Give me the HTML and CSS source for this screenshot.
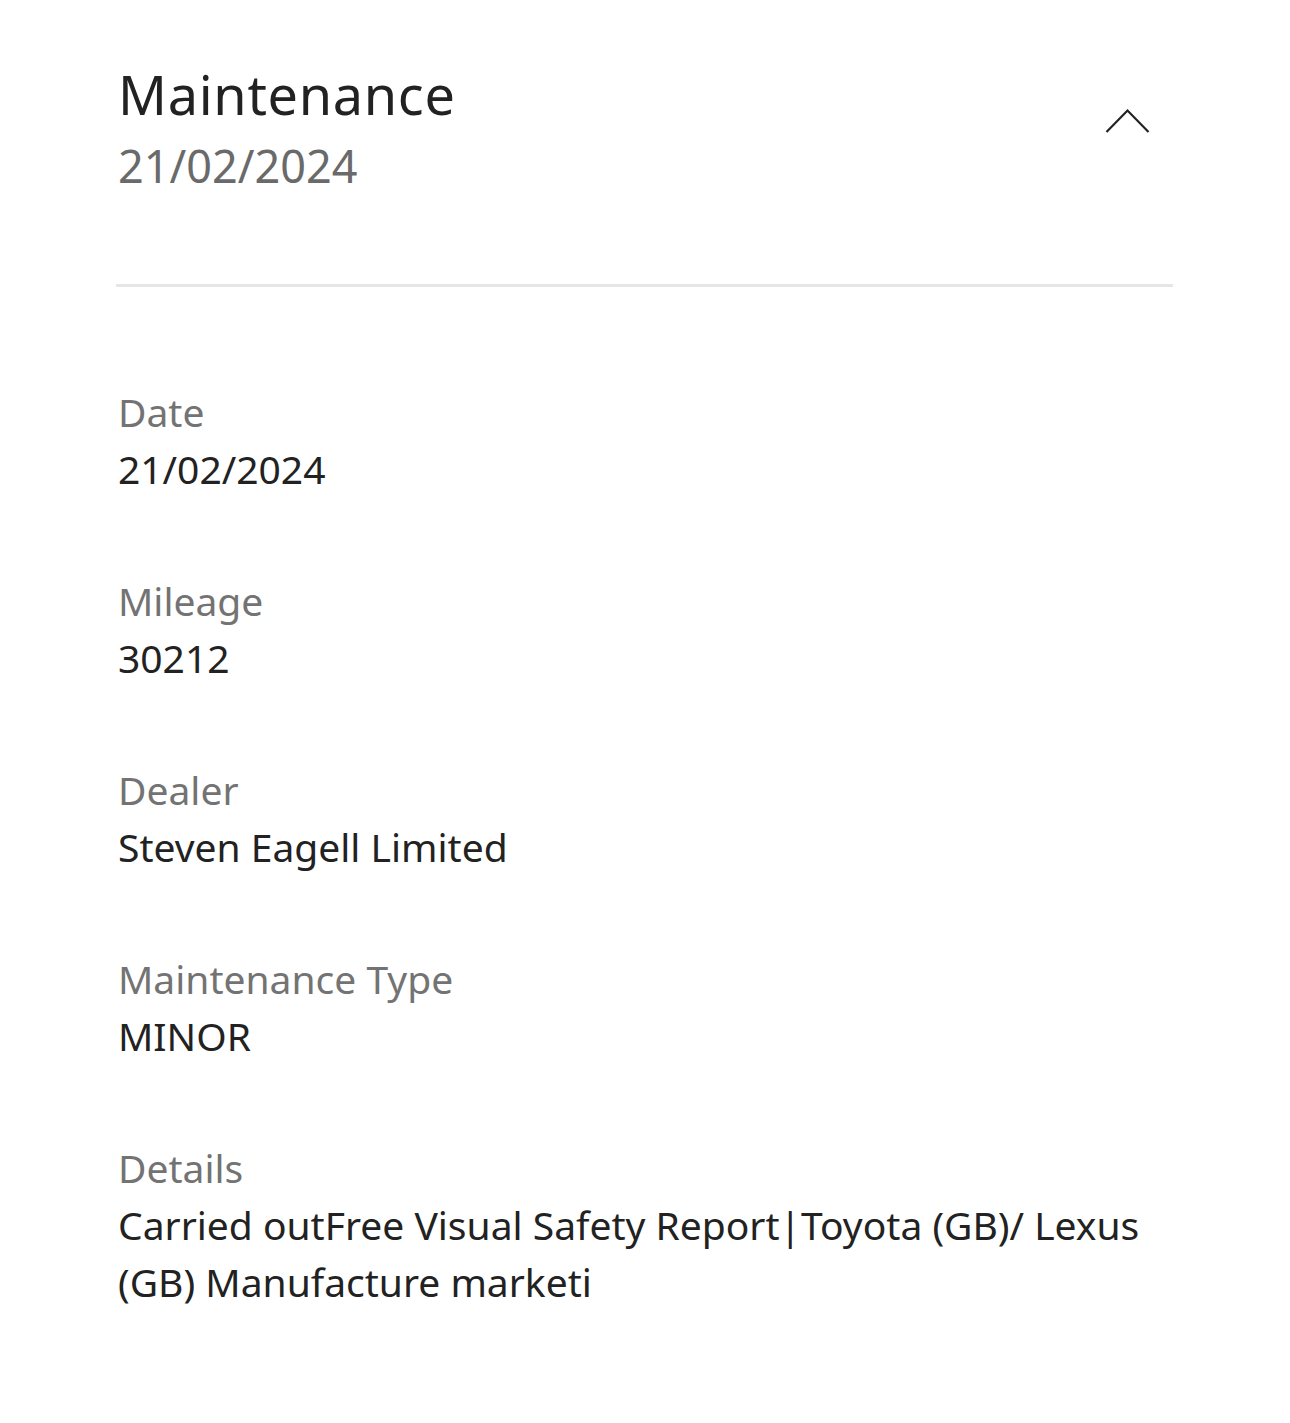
FILE: index.html
```html
<!DOCTYPE html>
<html lang="en">
<head>
<meta charset="utf-8">
<title>Maintenance</title>
<link rel="stylesheet" href="styles.css">
</head>
<body>
<main class="card">
  <header class="card-header">
    <div class="heading">
      <h1 class="title">Maintenance</h1>
      <div class="subtitle">21/02/2024</div>
    </div>
    <svg class="chevron" width="46" height="26" viewBox="0 0 46 26" aria-hidden="true">
      <polyline points="1.5,24 22.5,2.5 43.5,24" fill="none" stroke="#222" stroke-width="2.2"/>
    </svg>
  </header>
  <div class="divider"></div>
  <dl class="rows">
    <div class="row">
      <dt class="label">Date</dt>
      <dd class="value">21/02/2024</dd>
    </div>
    <div class="row">
      <dt class="label">Mileage</dt>
      <dd class="value">30212</dd>
    </div>
    <div class="row">
      <dt class="label">Dealer</dt>
      <dd class="value">Steven Eagell Limited</dd>
    </div>
    <div class="row">
      <dt class="label">Maintenance Type</dt>
      <dd class="value">MINOR</dd>
    </div>
    <div class="row">
      <dt class="label">Details</dt>
      <dd class="value">Carried outFree Visual Safety Report|Toyota (GB)/ Lexus (GB) Manufacture marketi</dd>
    </div>
  </dl>
</main>
</body>
</html>
```
FILE: styles.css
```css
html, body {
  margin: 0;
  padding: 0;
  background: #ffffff;
}

body {
  font-family: "Noto Sans", "Open Sans", sans-serif;
  color: #222222;
}

.card {
  padding: 0 117px 0 116px;
}

.card-header {
  display: flex;
  justify-content: space-between;
  align-items: flex-start;
  padding: 58px 0 82px 2px;
}

.title {
  margin: 0;
  font-size: 54px;
  line-height: 72px;
  font-weight: 400;
  letter-spacing: 0.7px;
  color: #222222;
}

.subtitle {
  font-size: 45px;
  line-height: 72px;
  color: #6a6a6a;
}

.chevron {
  display: block;
  margin-top: 50px;
  margin-right: 22px;
}

.divider {
  height: 3px;
  background: #e6e6e6;
}

.rows {
  margin: 0;
  padding: 97px 0 0 2px;
  display: flex;
  flex-direction: column;
  gap: 76px;
}

.row {
  display: flex;
  flex-direction: column;
}

.label {
  font-size: 39px;
  line-height: 56px;
  color: #737373;
}

.value {
  margin: 0;
  font-size: 39px;
  line-height: 57px;
  color: #222222;
}
```
